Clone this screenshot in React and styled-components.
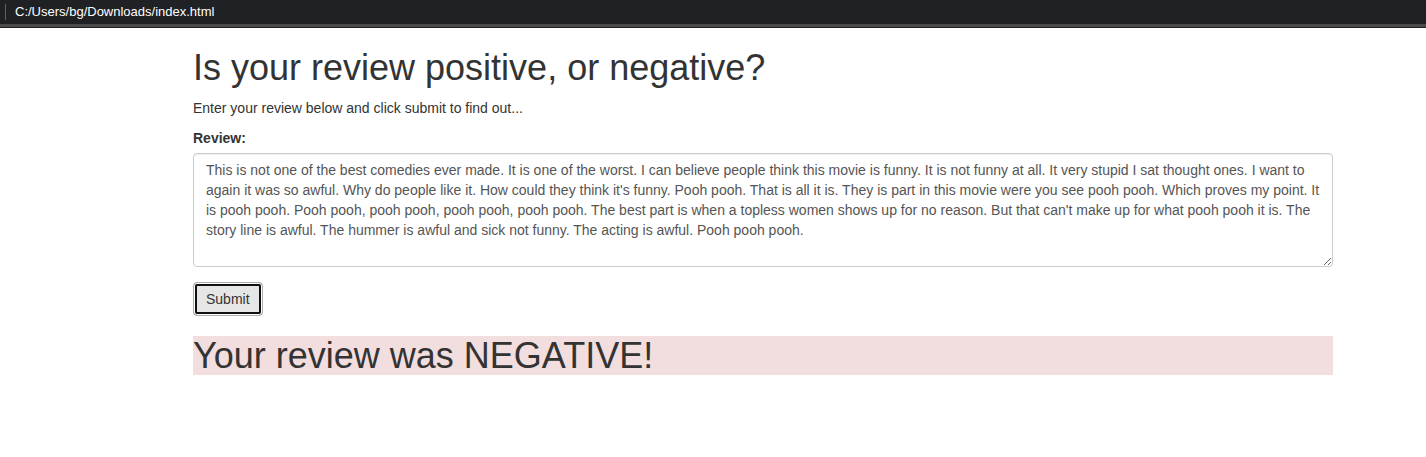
import styled, { createGlobalStyle } from "styled-components";

const GlobalStyle = createGlobalStyle`
  html, body {
    margin: 0;
    padding: 0;
    background: #fff;
  }
  body {
    font-family: "Liberation Sans", Arial, sans-serif;
    font-size: 14px;
    line-height: 1.42857143;
    color: #333;
  }
  * {
    box-sizing: border-box;
  }
`;

const AddressBar = styled.div`
  height: 24px;
  background: #202124;
  display: flex;
  align-items: center;
  padding-left: 5px;
  color: #fff;
  font-size: 13px;

  &::before {
    content: "";
    width: 1px;
    height: 16px;
    background: #5f6368;
    margin-right: 9px;
  }
`;

const BarStrip = styled.div`
  height: 4px;
  background: #4a4a4a;
  border-bottom: 1px solid #1f1f1f;
`;

const Container = styled.div`
  width: 1140px;
  margin-left: 193px;
`;

const Title = styled.h1`
  font-size: 36px;
  font-weight: 500;
  line-height: 1.1;
  margin: 20px 0 10px;
`;

const Lead = styled.p`
  margin: 0 0 10px;
`;

const FormGroup = styled.div`
  margin-bottom: 15px;

  label {
    display: inline-block;
    font-weight: bold;
    margin-bottom: 5px;
  }
`;

const TextArea = styled.textarea`
  display: block;
  width: 100%;
  height: 114px;
  padding: 6px 12px;
  font-family: inherit;
  font-size: 14px;
  line-height: 1.42857143;
  color: #555;
  background: #fff;
  border: 1px solid #ccc;
  border-radius: 4px;
  box-shadow: inset 0 1px 1px rgba(0, 0, 0, 0.075);
  outline: none;
`;

const Button = styled.button`
  display: inline-block;
  padding: 6px 12px;
  font-family: inherit;
  font-size: 14px;
  line-height: 1.42857143;
  color: #333;
  background: #e6e6e6;
  border: 1px solid #adadad;
  border-radius: 4px;
  box-shadow: inset 0 0 0 1px #fff, inset 0 0 0 3px #111;
  cursor: pointer;
`;

const Result = styled.h1`
  font-size: 36px;
  font-weight: 500;
  line-height: 1.1;
  margin: 20px 0 0;
  background: ${(p) => (p.$positive ? "#dff0d8" : "#f2dede")};
`;

const review =
  "This is not one of the best comedies ever made. It is one of the worst. I can believe people think this movie is funny. It is not funny at all. It very stupid I sat thought ones. I want to again it was so awful. Why do people like it. How could they think it's funny. Pooh pooh. That is all it is. They is part in this movie were you see pooh pooh. Which proves my point. It is pooh pooh. Pooh pooh, pooh pooh, pooh pooh, pooh pooh. The best part is when a topless women shows up for no reason. But that can't make up for what pooh pooh it is. The story line is awful. The hummer is awful and sick not funny. The acting is awful. Pooh pooh pooh.";

export default function App() {
  return (
    <>
      <GlobalStyle />
      <AddressBar>C:/Users/bg/Downloads/index.html</AddressBar>
      <BarStrip />
      <Container>
        <Title>Is your review positive, or negative?</Title>
        <Lead>Enter your review below and click submit to find out...</Lead>
        <form onSubmit={(e) => e.preventDefault()}>
          <FormGroup>
            <label htmlFor="review">Review:</label>
            <TextArea id="review" rows={5} defaultValue={review} />
          </FormGroup>
          <Button type="submit">Submit</Button>
        </form>
        <Result>Your review was NEGATIVE!</Result>
      </Container>
    </>
  );
}
